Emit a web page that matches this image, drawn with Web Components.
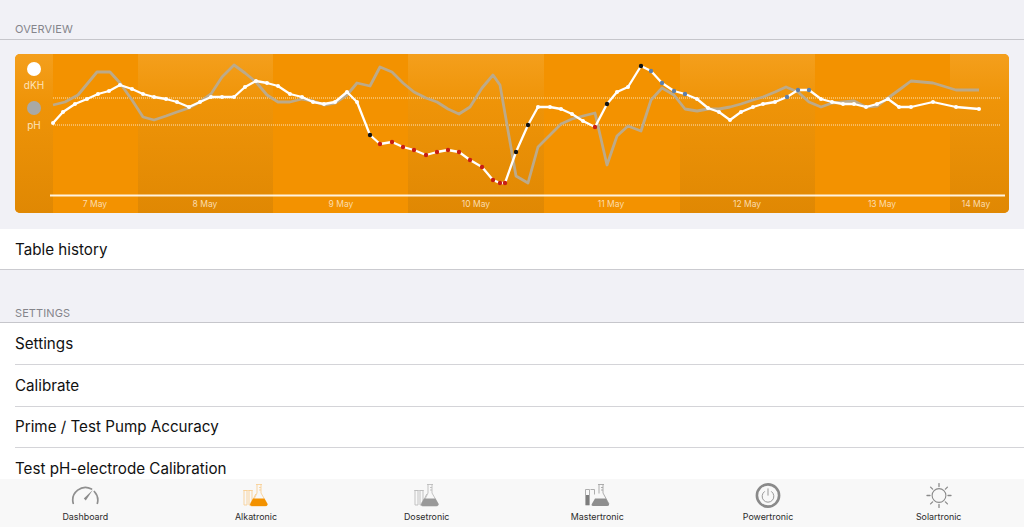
<!DOCTYPE html>
<html>
<head>
<meta charset="utf-8">
<title>Alkatronic</title>
<style>
html, body { margin: 0; height: 100%; overflow: hidden; background: #f1f1f6; }
body { font-family: Inter, "Liberation Sans", sans-serif; }
</style>
</head>
<body>
<app-shell>
    <section-header style="--top: 22px; --bottom: 3px">OVERVIEW</section-header>
    <trend-chart></trend-chart>
    <list-row last>Table history</list-row>
    <section-header style="--top: 36px; --bottom: 2.2px">SETTINGS</section-header>
    <list-row>Settings</list-row>
    <list-row>Calibrate</list-row>
    <list-row>Prime / Test Pump Accuracy</list-row>
    <list-row>Test pH-electrode Calibration</list-row>
    <tab-bar slot="tabs">
        <tab-item icon="gauge">Dashboard</tab-item>
        <tab-item icon="flask" active>Alkatronic</tab-item>
        <tab-item icon="flask">Dosetronic</tab-item>
        <tab-item icon="master">Mastertronic</tab-item>
        <tab-item icon="power">Powertronic</tab-item>
        <tab-item icon="sun">Solartronic</tab-item>
    </tab-bar>
</app-shell>

<script>
class AppShell extends HTMLElement {
    constructor() {
        super();
        this.attachShadow({mode: 'open'}).innerHTML = `
<style>
:host { display: flex; flex-direction: column; height: 527px; }
.content { flex: 1; min-height: 0; overflow: hidden; }
</style>
<div class="content"><slot></slot></div>
<slot name="tabs"></slot>`;
    }
}

class SectionHeader extends HTMLElement {
    constructor() {
        super();
        this.attachShadow({mode: 'open'}).innerHTML = `
<style>
:host {
    display: block;
    box-sizing: border-box;
    padding: var(--top, 22px) 15px var(--bottom, 3px);
    border-bottom: 1px solid #c6c6cb;
    font: 400 11px/14px Inter, "Liberation Sans", sans-serif;
    letter-spacing: 0.1px;
    color: #85858b;
}
</style>
<slot></slot>`;
    }
}

class ListRow extends HTMLElement {
    constructor() {
        super();
        this.attachShadow({mode: 'open'}).innerHTML = `
<style>
:host { display: block; background: #fff; }
.row {
    box-sizing: border-box;
    height: 41.7px;
    margin-left: 15px;
    display: flex;
    align-items: center;
    border-bottom: 1px solid #d4d4d8;
    font: 400 15.2px Inter, "Liberation Sans", sans-serif;
    color: #111;
}
:host([last]) { border-bottom: 1px solid #cbcbd0; }
:host([last]) .row { border-bottom: 0; height: 40px; }
</style>
<div class="row"><slot></slot></div>`;
    }
}

// page coordinates read off the screenshot, the chart card starts at 15,54
const DKH = [[53,123],[63,112],[75,104],[87,99],[98,94],[109,91],[120,85],[132,89],[143,94],[154,97],[166,99],[177,102],[189,107],[200,102],[211,97],[222,97],[234,97],[245,87],[256,81],[267,83],[278,86],[290,94],[302,97],[313,102],[324,104],[335,102],[347,92],[357,102],[370,135,'k'],[380,144,'r'],[392,142,'r'],[403,147,'r'],[414,150,'r'],[426,155,'r'],[437,152,'r'],[448,150,'r'],[459,152,'r'],[470,160,'r'],[482,167,'r'],[493,180,'r'],[500,183,'r'],[505,183,'r'],[516,152,'k'],[528,125,'k'],[538,107],[550,107],[561,109],[572,114],[583,121],[595,127,'r'],[607,104,'k'],[617,92],[628,87],[641,66,'k'],[651,71,'b'],[662,83,'b'],[674,91,'b'],[685,94,'b'],[697,99],[708,108],[719,112],[730,120],[741,112],[753,107],[763,104],[775,102],[787,97,'b'],[798,90,'b'],[809,90,'b'],[821,99],[832,102],[843,104],[854,104],[866,107],[877,104],[888,99],[899,107],[911,107],[933,102],[956,107],[979,109]];
const PH = [[53,105],[65,102],[78,95],[97,72],[110,72],[120,83],[132,100],[143,117],[154,120],[166,116],[177,112],[189,108],[200,102],[211,94],[222,77],[234,65],[245,73],[256,82],[267,95],[278,102],[290,102],[302,99],[313,101],[324,105],[335,103],[347,95],[357,83],[370,86],[380,67],[392,72],[403,83],[414,92],[426,98],[437,102],[448,109],[459,114],[470,107],[482,88],[493,75],[500,85],[516,176],[528,183],[538,147],[550,135],[561,124],[572,119],[583,116],[595,113],[607,165],[617,136],[628,126],[641,131],[651,100],[662,88],[674,95],[685,109],[697,111],[708,109],[719,109],[730,107],[741,104],[753,100],[763,97],[775,92],[786,87],[798,92],[809,102],[821,107],[832,103],[843,102],[854,101],[866,107],[877,106],[888,98],[899,90],[911,81],[933,83],[956,90],[979,90]];
const DAYS = [['7 May',53,138,95],['8 May',138,273,205],['9 May',273,408,341],['10 May',408,544,476],['11 May',544,680,611],['12 May',680,815,747],['13 May',815,950,882],['14 May',950,1009,976]];
const DOT_COLORS = {k: '#111', r: '#c81e12', b: '#5f7fa8'};

class TrendChart extends HTMLElement {
    constructor() {
        super();
        const line = pts => pts.map(p => p[0] + ',' + p[1]).join(' ');
        const bands = DAYS.map((d, i) => i % 2
            ? `<rect x="${d[1]}" y="54" width="${d[2] - d[1]}" height="159" fill="url(#band)"/>` : '').join('');
        const labels = DAYS.map(d => `<text x="${d[3]}" y="207" class="day">${d[0]}</text>`).join('');
        const dots = DKH.map(p => p[2]
            ? `<circle cx="${p[0]}" cy="${p[1]}" r="2.2" fill="${DOT_COLORS[p[2]]}"/>`
            : `<circle cx="${p[0]}" cy="${p[1]}" r="2" fill="#fff"/>`).join('');
        this.attachShadow({mode: 'open'}).innerHTML = `
<style>
:host { display: block; padding: 14px 15px 16px; }
svg { display: block; width: 994px; height: 159px; border-radius: 5px; }
.day { font: 400 8.5px Inter, "Liberation Sans", sans-serif; fill: #fbdcae; text-anchor: middle; }
.legend { font: 400 10px Inter, "Liberation Sans", sans-serif; fill: #fde3ba; text-anchor: middle; }
</style>
<svg viewBox="15 54 994 159">
    <defs>
        <linearGradient id="band" x1="0" y1="0" x2="0" y2="1">
            <stop offset="0" stop-color="#f49f1c"/>
            <stop offset="0.3" stop-color="#ef9408"/>
            <stop offset="1" stop-color="#e08803"/>
        </linearGradient>
    </defs>
    <rect x="15" y="54" width="994" height="159" fill="#f39200"/>
    <rect x="15" y="54" width="38" height="159" fill="url(#band)"/>
    ${bands}
    <line x1="53" x2="1000" y1="98" y2="98" stroke="#fde3ba" stroke-width="1" stroke-dasharray="1 1"/>
    <line x1="53" x2="1000" y1="125" y2="125" stroke="#fde3ba" stroke-width="1" stroke-dasharray="1 1"/>
    <polyline points="${line(PH)}" fill="none" stroke="#bcaa8a" stroke-width="2.8" stroke-linejoin="round"/>
    <polyline points="${line(DKH)}" fill="none" stroke="#fff" stroke-width="2.3" stroke-linejoin="round"/>
    ${dots}
    <line x1="50" x2="1005" y1="195.5" y2="195.5" stroke="#fff3df" stroke-width="2"/>
    <circle cx="34" cy="69" r="7" fill="#fff"/>
    <text x="34" y="89" class="legend">dKH</text>
    <circle cx="34" cy="108" r="7" fill="#a9a9a6"/>
    <text x="34" y="128.500" class="legend">pH</text>
    ${labels}
</svg>`;
    }
}

const ICONS = {
    gauge: `<path d="M2.200 20.300A12.700 12.700 0 0 1 20.500 6M23.300 8.500A12.700 12.700 0 0 1 26.400 20.300" fill="none" stroke="#8f8f8f" stroke-width="1.700" stroke-linecap="round"/>
        <path d="M12.800 15.600L21.700 7L14.800 17.400z" fill="#8a8a8a"/>`,
    flask: `<g transform="translate(-1.500 0)">
        <g fill="none" stroke="var(--line)" stroke-width="0.900">
            <path d="M3.500 7.500v14.500h3V7.500zM2.700 7.500h4.600M8.500 7.500v14.500h3V7.500zM7.700 7.500h4.600"/>
            <path d="M15.500 1.500h6M16.500 1.500v8.500l-3 6M20.500 1.500v8.500M18.500 4.500h2M18.500 7h2"/>
        </g>
        <path d="M20.500 10l6 10.500c.6 1.300-.2 2.500-1.700 2.500H11.200c-1 0-1.700-.6-1.700-1.500 0-.4.1-.7.3-1l3.700-6 1.800-3.500" fill="none" stroke="var(--line)" stroke-width="0.900"/>
        <path d="M12.500 15.500h11.400l3 5.200c.5 1.200-.2 2.300-1.700 2.300H11.300c-1.300 0-2.200-1-1.500-2.200z" fill="var(--fill)"/>
        </g>`,
    master: `<g transform="translate(-1 0)"><g fill="none" stroke="#a5a5a5" stroke-width="0.900">
            <path d="M3.500 6.500v15.500h4V6.500zM8.500 6.500h4v5M16 1.500h6M17 1.500v9M21 1.500v8.500M19 4.500h2M19 7h2"/>
            <path d="M21 10l6 11"/>
        </g>
        <rect x="4" y="12" width="3" height="10" fill="#7d7d7d"/>
        <path d="M13 15.500h11l3 5.500c.4 1.200-.4 2-1.700 2H11c-1.200 0-1.800-1-1.200-2z" fill="#8e8e8e"/></g>`,
    power: `<circle cx="14" cy="12.500" r="11.100" fill="none" stroke="#8a8a8a" stroke-width="2.600"/>
        <path d="M10.400 8.600a5.900 5.900 0 1 0 7.200 0M14 5.800v6.400" fill="none" stroke="#989898" stroke-width="1" stroke-linecap="round"/>`,
    sun: `<circle cx="14" cy="12.500" r="6.900" fill="none" stroke="#8a8a8a" stroke-width="1.100"/>
        <path d="M14 .6v3M14 21.400v3M2 12.500h3M23 12.500h3M5.600 4.100l2 2M20.400 18.900l2 2M22.400 4.100l-2 2M7.600 18.900l-2 2" fill="none" stroke="#8a8a8a" stroke-width="1.300" stroke-linecap="round"/>`
};

class TabBar extends HTMLElement {
    constructor() {
        super();
        this.attachShadow({mode: 'open'}).innerHTML = `
<style>
:host {
    display: grid;
    grid-template-columns: repeat(6, 1fr);
    height: 48px;
    background: #f8f8f8;
}
</style>
<slot></slot>`;
    }
}

class TabItem extends HTMLElement {
    constructor() {
        super();
        const active = this.hasAttribute('active');
        const colors = active
            ? '--line:#f8d096;--fill:#f39200;'
            : '--line:#bcbcbc;--fill:#999;';
        this.attachShadow({mode: 'open'}).innerHTML = `
<style>
:host {
    display: flex;
    flex-direction: column;
    align-items: center;
    font: 400 8.900px/11px Inter, "Liberation Sans", sans-serif;
    color: #2b2b2b;
    ${colors}
}
svg { display: block; width: 28px; height: 25px; margin-top: 4px; margin-bottom: 3px; }
</style>
<svg viewBox="0 0 28 25"></svg>
<slot></slot>`;
    }

    connectedCallback() {
        this.shadowRoot.querySelector('svg').innerHTML = ICONS[this.getAttribute('icon')];
    }
}

customElements.define('app-shell', AppShell);
customElements.define('section-header', SectionHeader);
customElements.define('list-row', ListRow);
customElements.define('trend-chart', TrendChart);
customElements.define('tab-bar', TabBar);
customElements.define('tab-item', TabItem);
</script>
</body>
</html>
